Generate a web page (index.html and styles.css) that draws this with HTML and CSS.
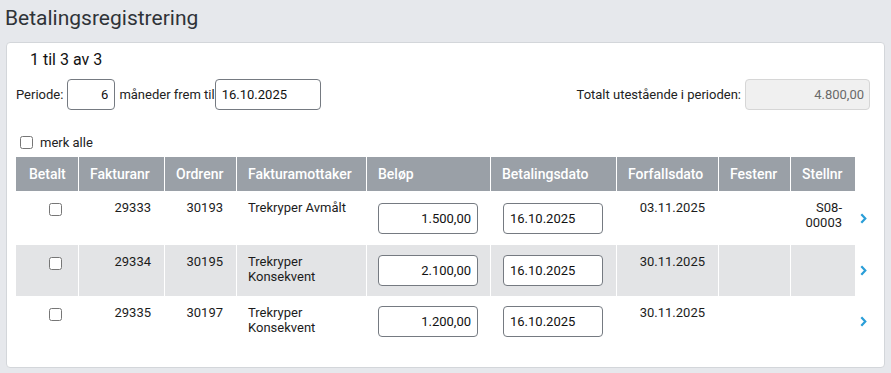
FILE: index.html
```html
<!DOCTYPE html>
<html lang="no">
<head>
<meta charset="utf-8">
<title>Betalingsregistrering</title>
<link rel="stylesheet" href="styles.css">
</head>
<body>
<h1 class="title">Betalingsregistrering</h1>
<div class="panel">
  <div class="count">1 til 3 av 3</div>
  <div class="period">
    <div class="period-left">
      <span>Periode:</span>
      <input class="inp inp-months" type="text" value="6">
      <span>måneder frem til</span>
      <input class="inp inp-date" type="text" value="16.10.2025">
    </div>
    <div class="period-right">
      <span>Totalt utestående i perioden:</span>
      <input class="inp inp-total" type="text" value="4.800,00" disabled>
    </div>
  </div>
  <label class="mark-all"><input type="checkbox" class="cb"><span>merk alle</span></label>
  <table class="grid">
    <colgroup>
      <col class="c-betalt"><col class="c-faktnr"><col class="c-ordre"><col class="c-mottaker"><col class="c-belop"><col class="c-bdato"><col class="c-fdato"><col class="c-feste"><col class="c-stell"><col class="c-chev">
    </colgroup>
    <thead>
      <tr>
        <th>Betalt</th><th>Fakturanr</th><th>Ordrenr</th><th>Fakturamottaker</th><th>Beløp</th><th>Betalingsdato</th><th>Forfallsdato</th><th>Festenr</th><th>Stellnr</th><th class="chev-cell"></th>
      </tr>
    </thead>
    <tbody>
      <tr class="r1">
        <td class="chk"><input type="checkbox" class="cb"></td>
        <td class="num">29333</td>
        <td class="num">30193</td>
        <td>Trekryper Avmålt</td>
        <td class="mid"><input class="inp inp-amount" type="text" value="1.500,00"></td>
        <td class="mid"><input class="inp inp-pdate" type="text" value="16.10.2025"></td>
        <td class="num">03.11.2025</td>
        <td></td>
        <td class="num">S08-<br>00003</td>
        <td class="chev-cell"><svg class="chev" width="7" height="11" viewBox="0 0 7 11"><path d="M1.3 1.2 L5.3 5.5 L1.3 9.8" fill="none" stroke="#2a9ed8" stroke-width="2.2"/></svg></td>
      </tr>
      <tr class="r2 alt">
        <td class="chk"><input type="checkbox" class="cb"></td>
        <td class="num">29334</td>
        <td class="num">30195</td>
        <td>Trekryper<br>Konsekvent</td>
        <td class="mid"><input class="inp inp-amount" type="text" value="2.100,00"></td>
        <td class="mid"><input class="inp inp-pdate" type="text" value="16.10.2025"></td>
        <td class="num">30.11.2025</td>
        <td></td>
        <td></td>
        <td class="chev-cell"><svg class="chev" width="7" height="11" viewBox="0 0 7 11"><path d="M1.3 1.2 L5.3 5.5 L1.3 9.8" fill="none" stroke="#2a9ed8" stroke-width="2.2"/></svg></td>
      </tr>
      <tr class="r3">
        <td class="chk"><input type="checkbox" class="cb"></td>
        <td class="num">29335</td>
        <td class="num">30197</td>
        <td>Trekryper<br>Konsekvent</td>
        <td class="mid"><input class="inp inp-amount" type="text" value="1.200,00"></td>
        <td class="mid"><input class="inp inp-pdate" type="text" value="16.10.2025"></td>
        <td class="num">30.11.2025</td>
        <td></td>
        <td></td>
        <td class="chev-cell"><svg class="chev" width="7" height="11" viewBox="0 0 7 11"><path d="M1.3 1.2 L5.3 5.5 L1.3 9.8" fill="none" stroke="#2a9ed8" stroke-width="2.2"/></svg></td>
      </tr>
    </tbody>
  </table>
</div>
</body>
</html>
```
FILE: styles.css
```css
* { box-sizing: border-box; }
html, body {
  margin: 0;
  padding: 0;
}
body {
  background: #e6e8ec;
  font-family: Roboto, "Liberation Sans", sans-serif;
  color: #222;
  font-size: 13px;
  width: 891px;
  height: 373px;
  overflow: hidden;
}
.title {
  margin: 0;
  height: 42px;
  padding: 5px 0 0 5px;
  font-size: 21px;
  font-weight: 400;
  line-height: 26px;
  color: #2f3338;
}
.panel {
  margin: 0 6px 0 6px;
  height: 326px;
  background: #fff;
  border: 1px solid #d3d6da;
  border-radius: 4px;
  padding: 0 14px 0 9px;
}
.count {
  margin-top: 7px;
  padding-left: 14px;
  font-size: 16px;
  line-height: 20px;
  color: #111;
}
.period {
  margin-top: 9px;
  display: flex;
  justify-content: space-between;
  align-items: center;
  height: 31px;
}
.period-left, .period-right {
  display: flex;
  align-items: center;
  gap: 4px;
}
.period-left { margin-left: 0; }
.period-left .inp-date { margin-left: -4px; }
.inp {
  font-family: Roboto, "Liberation Sans", sans-serif;
  font-size: 13px;
  color: #111;
  height: 31px;
  border: 1px solid #757a81;
  border-radius: 4px;
  background: #fff;
  padding: 0 6px;
  outline: none;
}
.inp-months { width: 48px; text-align: right; }
.inp-date { width: 106px; }
.inp-total {
  width: 125px;
  text-align: right;
  background: #f0f0f0;
  border-color: #d6d6d6;
  color: #6a6a6a;
  padding-right: 5px;
}
.mark-all {
  margin-top: 24px;
  display: flex;
  align-items: center;
  height: 16px;
}
.mark-all span { margin-left: 4px; }
.cb {
  width: 13px;
  height: 13px;
  margin: 0 3px 0 4px;
}
.grid {
  margin-top: 7px;
  border-collapse: separate;
  border-spacing: 0;
  table-layout: fixed;
  width: 854px;
}
.c-betalt { width: 62px; }
.c-faktnr { width: 86px; }
.c-ordre { width: 72px; }
.c-mottaker { width: 130px; }
.c-belop { width: 124px; }
.c-bdato { width: 126px; }
.c-fdato { width: 102px; }
.c-feste { width: 72px; }
.c-stell { width: 65px; }
.c-chev { width: 15px; }
.grid th {
  height: 34px;
  background: #9aa0a7;
  color: #fff;
  font-weight: 500;
  font-size: 14px;
  text-align: left;
  padding: 0 4px 0 11px;
  border-left: 1px solid #fff;
  white-space: nowrap;
}
.grid th:first-child { border-left: 0; padding-left: 13px; }
.grid td {
  border-left: 1px solid #fff;
  vertical-align: top;
  padding: 9px 13px 0 11px;
  line-height: 15px;
  color: #1c1c1c;
}
.grid td:first-child { border-left: 0; }
.grid th.chev-cell { background: transparent; border-left: 0; padding: 0; }
.grid td.chev-cell { border-left: 0; padding: 0 0 0 5px; vertical-align: middle; background: #fff; }
.chev { display: block; }
.r1 { height: 54px; }
.r2, .r3 { height: 51px; }
.alt td { background: #e3e4e6; }
.alt td.chev-cell { background: #fff; }
.grid td.num { text-align: right; }
.grid td.chk { text-align: right; padding-right: 13px; padding-top: 12px; }
.grid td.chk .cb { display: inline-block; vertical-align: top; margin: 0 3px 0 0; }
.grid td.mid { vertical-align: middle; padding-top: 0; padding-left: 11px; padding-right: 0; }
.inp-amount { width: 100px; text-align: right; display: block; }
.inp-pdate { width: 100px; display: block; margin-left: 1px; }
```
